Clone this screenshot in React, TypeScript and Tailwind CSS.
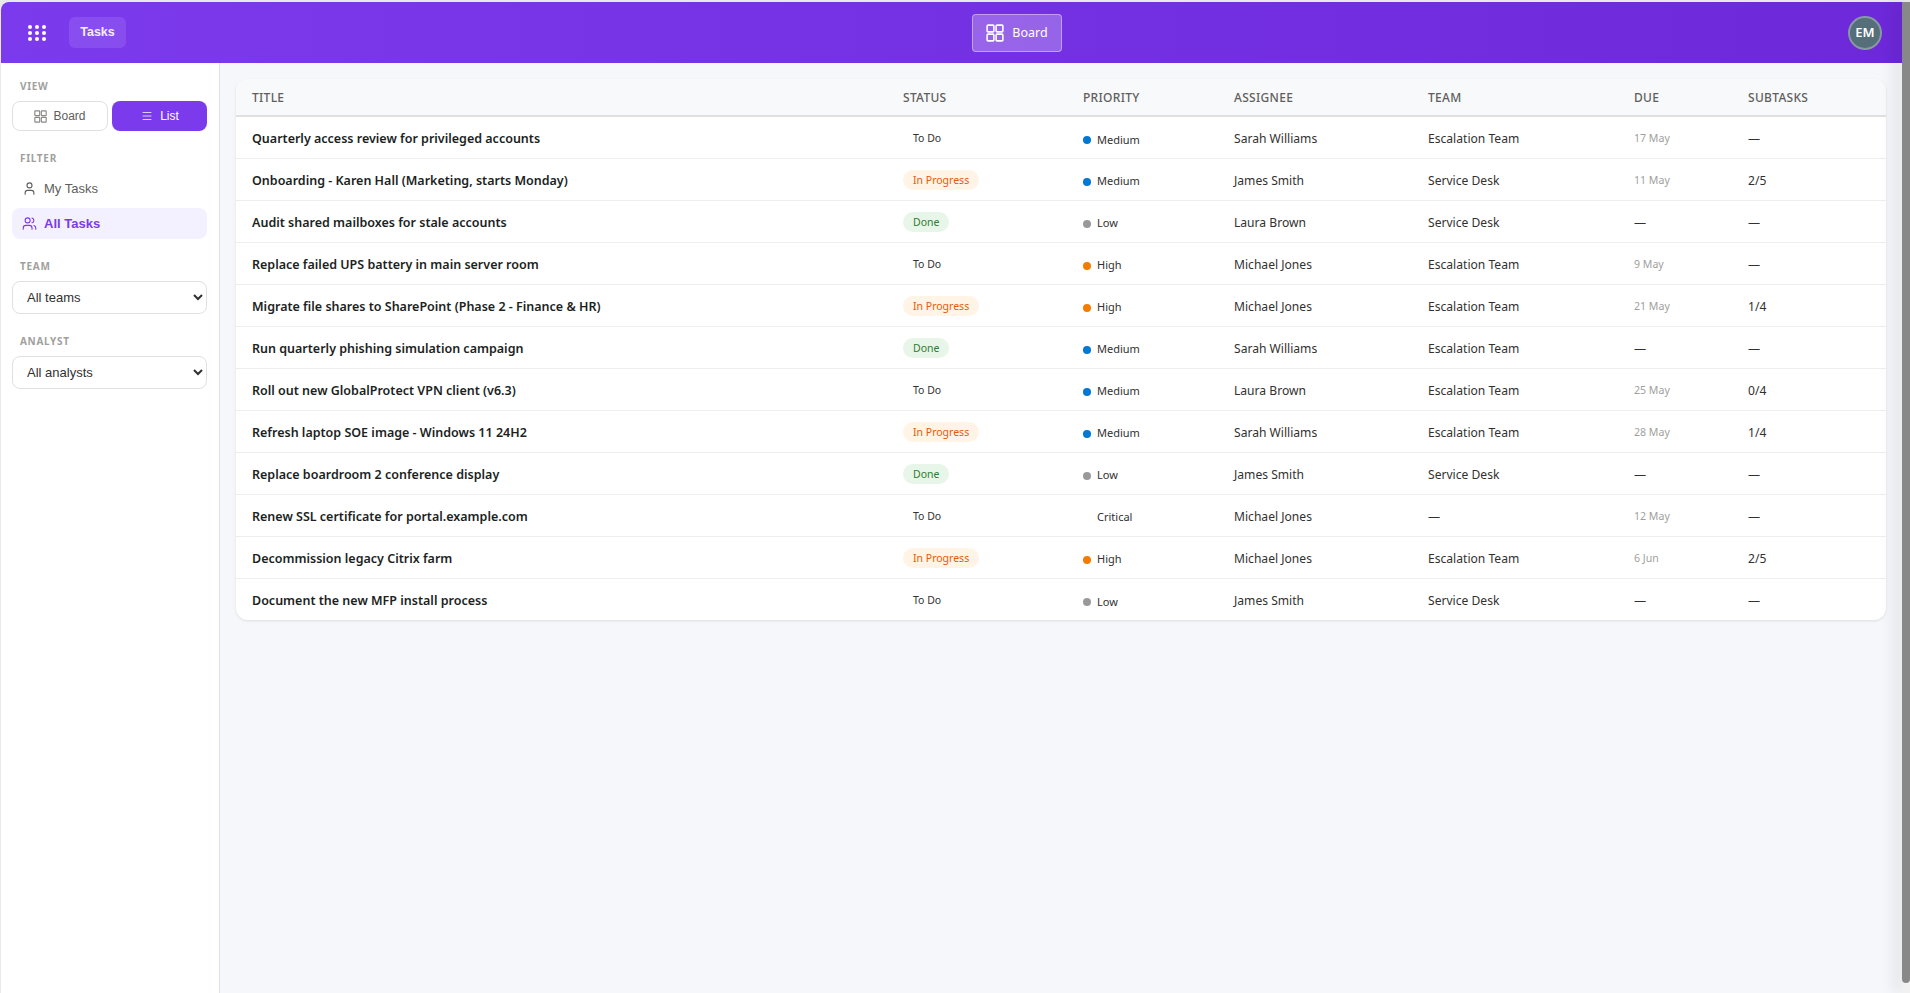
import { Menu, User, Users } from "lucide-react";

type Status = "To Do" | "In Progress" | "Done";
type Priority = "Medium" | "Low" | "High" | "Critical";

const tasks: {
  title: string;
  status: Status;
  priority: Priority;
  assignee: string;
  team: string;
  due: string;
  subtasks: string;
}[] = [
  { title: "Quarterly access review for privileged accounts", status: "To Do", priority: "Medium", assignee: "Sarah Williams", team: "Escalation Team", due: "17 May", subtasks: "—" },
  { title: "Onboarding - Karen Hall (Marketing, starts Monday)", status: "In Progress", priority: "Medium", assignee: "James Smith", team: "Service Desk", due: "11 May", subtasks: "2/5" },
  { title: "Audit shared mailboxes for stale accounts", status: "Done", priority: "Low", assignee: "Laura Brown", team: "Service Desk", due: "—", subtasks: "—" },
  { title: "Replace failed UPS battery in main server room", status: "To Do", priority: "High", assignee: "Michael Jones", team: "Escalation Team", due: "9 May", subtasks: "—" },
  { title: "Migrate file shares to SharePoint (Phase 2 - Finance & HR)", status: "In Progress", priority: "High", assignee: "Michael Jones", team: "Escalation Team", due: "21 May", subtasks: "1/4" },
  { title: "Run quarterly phishing simulation campaign", status: "Done", priority: "Medium", assignee: "Sarah Williams", team: "Escalation Team", due: "—", subtasks: "—" },
  { title: "Roll out new GlobalProtect VPN client (v6.3)", status: "To Do", priority: "Medium", assignee: "Laura Brown", team: "Escalation Team", due: "25 May", subtasks: "0/4" },
  { title: "Refresh laptop SOE image - Windows 11 24H2", status: "In Progress", priority: "Medium", assignee: "Sarah Williams", team: "Escalation Team", due: "28 May", subtasks: "1/4" },
  { title: "Replace boardroom 2 conference display", status: "Done", priority: "Low", assignee: "James Smith", team: "Service Desk", due: "—", subtasks: "—" },
  { title: "Renew SSL certificate for portal.example.com", status: "To Do", priority: "Critical", assignee: "Michael Jones", team: "—", due: "12 May", subtasks: "—" },
  { title: "Decommission legacy Citrix farm", status: "In Progress", priority: "High", assignee: "Michael Jones", team: "Escalation Team", due: "6 Jun", subtasks: "2/5" },
  { title: "Document the new MFP install process", status: "To Do", priority: "Low", assignee: "James Smith", team: "Service Desk", due: "—", subtasks: "—" },
];

const statusStyles: Record<Status, string> = {
  "To Do": "text-[#323130]",
  "In Progress": "bg-[#fff4e5] text-[#e8590c]",
  Done: "bg-[#e8f5e9] text-[#2e7d32]",
};

const priorityDots: Record<Priority, string> = {
  Medium: "bg-[#0078d4]",
  Low: "bg-[#999999]",
  High: "bg-[#f57c00]",
  Critical: "bg-transparent",
};

const headers = ["Title", "Status", "Priority", "Assignee", "Team", "Due", "Subtasks"];

function AppsIcon() {
  return (
    <svg width="18" height="16" viewBox="0 0 18 16" fill="white">
      {[2, 9, 16].map((x) =>
        [2, 8, 14].map((y) => <circle key={`${x}-${y}`} cx={x} cy={y} r="2" />)
      )}
    </svg>
  );
}

function GridIcon({ size, className }: { size: number; className?: string }) {
  return (
    <svg width={size} height={size} viewBox="0 0 16 16" fill="none" stroke="currentColor" strokeWidth="1.4" className={className}>
      <rect x="1" y="1" width="6" height="6" rx="0.8" />
      <rect x="9" y="1" width="6" height="6" rx="0.8" />
      <rect x="1" y="9" width="6" height="6" rx="0.8" />
      <rect x="9" y="9" width="6" height="6" rx="0.8" />
    </svg>
  );
}

function SidebarLabel({ children }: { children: string }) {
  return (
    <p className="pl-2 font-['Noto_Sans'] text-[10px] leading-[14px] font-bold tracking-[0.7px] text-[#a19f9d] uppercase">
      {children}
    </p>
  );
}

function FilterSelect({ label }: { label: string }) {
  return (
    <select className="mt-[8px] h-[33px] w-[195px] rounded-lg border border-[#e0e0e0] bg-white pr-[2px] pl-[10px] font-['Liberation_Sans'] text-[13px] text-[#323130]">
      <option>{label}</option>
    </select>
  );
}

export default function App() {
  return (
    <div className="flex h-[993px] w-[1910px] overflow-hidden bg-[#e9e9e9] pt-[2px] pl-[1px]">
      <div className="flex min-w-0 flex-1 flex-col overflow-hidden rounded-tl-lg bg-[#f5f7fb]">
        <header className="flex h-[61px] shrink-0 items-center justify-between bg-gradient-to-r from-[#7c3aed] to-[#6d28d9] pr-[20px] pl-[27px]">
          <div className="flex w-[424px] items-center">
            <AppsIcon />
            <span className="ml-[23px] flex h-[31px] w-[57px] items-center justify-center rounded-md bg-white/10 font-['Liberation_Sans'] text-[12.5px] font-bold text-white/90">
              Tasks
            </span>
          </div>
          <button className="flex h-[38px] w-[90px] items-center justify-center gap-[8px] rounded-[4px] border border-white/40 bg-white/25 font-['Noto_Sans'] text-[12.5px] text-white">
            <GridIcon size={18} />
            <span className="pt-[2px]">Board</span>
          </button>
          <div className="flex w-[300px] justify-end">
            <span className="flex h-[34px] w-[34px] items-center justify-center rounded-full border-2 border-white/30 bg-[#546e7a] font-['Noto_Sans'] text-[13px] font-semibold text-white">
              EM
            </span>
          </div>
        </header>

        <div className="flex min-h-0 flex-1">
          <aside className="w-[219px] shrink-0 border-r border-[#e0e0e0] bg-white pt-[16px] pl-[11px]">
            <SidebarLabel>View</SidebarLabel>
            <div className="mt-[8px] flex gap-[4px]">
              <button className="flex h-[30px] w-[96px] items-center justify-center gap-[6px] rounded-lg border border-[#e0e0e0] bg-white font-['Liberation_Sans'] text-[12px] text-[#605e5c]">
                <GridIcon size={13} className="text-[#8a8886]" />
                Board
              </button>
              <button className="flex h-[30px] w-[95px] items-center justify-center gap-[7px] rounded-lg bg-[#7c3aed] pl-[1px] font-['Liberation_Sans'] text-[12px] text-white">
                <Menu size={12} strokeWidth={1.5} />
                List
              </button>
            </div>

            <div className="mt-[20px]">
              <SidebarLabel>Filter</SidebarLabel>
            </div>
            <div className="mt-[8px] flex h-[31px] w-[195px] items-center gap-[7px] pl-[10px] font-['Liberation_Sans'] text-[13px] text-[#605e5c]">
              <User size={15} strokeWidth={1.75} />
              My Tasks
            </div>
            <div className="mt-[4px] flex h-[31px] w-[195px] items-center gap-[7px] rounded-lg bg-[#f3f0ff] pl-[10px] font-['Liberation_Sans'] text-[13px] font-bold text-[#7c3aed]">
              <Users size={15} strokeWidth={1.75} />
              All Tasks
            </div>

            <div className="mt-[20px]">
              <SidebarLabel>Team</SidebarLabel>
            </div>
            <FilterSelect label="All teams" />

            <div className="mt-[20px]">
              <SidebarLabel>Analyst</SidebarLabel>
            </div>
            <FilterSelect label="All analysts" />
          </aside>

          <main className="min-w-0 flex-1 pt-[16px] pr-[16px] pl-[16px]">
            <div className="overflow-hidden rounded-xl bg-white shadow-[0_1px_3px_rgba(0,0,0,0.1)]">
              <table className="w-full table-fixed border-collapse font-['Noto_Sans'] text-[12.1px] text-[#323130]">
                <colgroup>
                  <col className="w-[667px]" />
                  <col className="w-[180px]" />
                  <col className="w-[151px]" />
                  <col className="w-[194px]" />
                  <col className="w-[206px]" />
                  <col className="w-[114px]" />
                  <col />
                </colgroup>
                <thead>
                  <tr className="h-[37px] border-b-2 border-[#e0e0e0] bg-[#f8f9fb]">
                    {headers.map((h, i) => (
                      <th
                        key={h}
                        className={`pt-[2px] text-left text-[12px] font-medium tracking-[0.3px] text-[#605e5c] uppercase ${i === 0 ? "pl-[16px]" : ""}`}
                      >
                        {h}
                      </th>
                    ))}
                  </tr>
                </thead>
                <tbody>
                  {tasks.map((t) => (
                    <tr key={t.title} className="h-[42px] border-b border-[#eeeeee] last:border-b-0">
                      <td className="truncate pt-[4px] pl-[16px] text-[12.5px] font-semibold text-[#201f1e]">{t.title}</td>
                      <td className="pt-[2px]">
                        <span className={`inline-block rounded-full px-[10px] text-[10.5px] leading-[20px] ${statusStyles[t.status]}`}>
                          {t.status}
                        </span>
                      </td>
                      <td className="pt-[2px]">
                        <span className="flex items-center gap-[6px] pt-[3px] text-[11px]">
                          <span className={`h-[8px] w-[8px] rounded-full ${priorityDots[t.priority]}`} />
                          {t.priority}
                        </span>
                      </td>
                      <td className="pt-[4px]">{t.assignee}</td>
                      <td className="pt-[4px]">{t.team}</td>
                      <td className={`pt-[4px] ${t.due === "—" ? "" : "text-[10.6px] text-[#a19f9d]"}`}>{t.due}</td>
                      <td className="pt-[4px]">{t.subtasks}</td>
                    </tr>
                  ))}
                </tbody>
              </table>
            </div>
          </main>
        </div>
      </div>

      <div className="z-10 w-[8px] shrink-0 bg-[#f1f1f1] shadow-[-8px_0_14px_rgba(0,0,0,0.1)]">
        <div className="h-[981px] rounded-b bg-[#888888]" />
      </div>
    </div>
  );
}
